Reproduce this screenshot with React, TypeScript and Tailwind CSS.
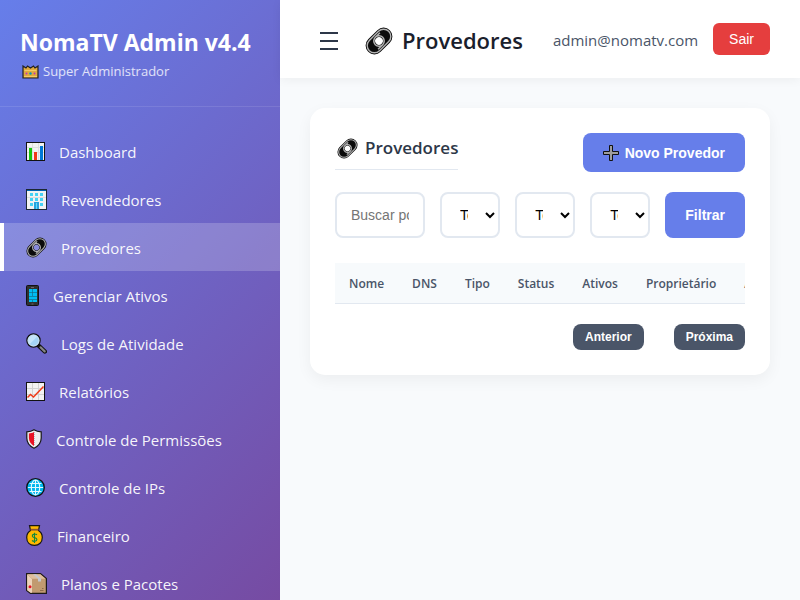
import React from 'react';

function LinkIcon({ size }: { size: number }) {
  return (
    <svg width={size} height={size} viewBox="0 0 28 28" fill="none" aria-hidden="true" className="shrink-0">
      <g transform="rotate(-45 14 14)">
        <path
          fillRule="evenodd"
          fill="#0b0b0b"
          d="M7.500 5.200H20.500A8.800 8.800 0 0 1 20.500 22.800H7.500A8.800 8.800 0 0 1 7.500 5.200ZM14 10.2A3.800 3.800 0 1 0 14 17.8A3.800 3.800 0 1 0 14 10.2Z"
        />
        <rect x="0.3" y="6.8" width="27.400" height="14.400" rx="7.2" stroke="#b4b4b4" strokeWidth="1.400" />
        <path d="M14 8.800A5.200 5.200 0 0 1 14 19.200H7.500M14 19.200A5.200 5.200 0 0 1 14 8.800H20.500" stroke="#b4b4b4" strokeWidth="1.500" />
      </g>
    </svg>
  );
}

function ChartIcon() {
  return (
    <svg width="19" height="19" viewBox="0 0 19 19" aria-hidden="true" className="shrink-0">
      <rect x="0.5" y="0.5" width="18" height="18" fill="#f2f2f2" stroke="#111" />
      <path d="M1 5.5H18M1 10.5H18M6.5 1V18M12.5 1V18" stroke="#dedede" strokeWidth="1" />
      <rect x="3" y="6" width="3" height="12" fill="#16c60c" />
      <rect x="8" y="10" width="3" height="8" fill="#f03a17" />
      <rect x="14" y="4" width="3" height="14" fill="#0078d7" />
    </svg>
  );
}

function BuildingIcon() {
  return (
    <svg width="21" height="21" viewBox="0 0 21 21" aria-hidden="true" className="shrink-0">
      <rect x="0.5" y="0.5" width="20" height="20" fill="#f2f2f2" stroke="#1b2733" />
      <rect x="1" y="1" width="19" height="1" fill="#0063b1" />
      <path d="M1 8.5H20" stroke="#ddd" />
      <path d="M4 4h3v3H4zM9 4h3v3H9zM14 4h3v3h-3zM4 9h3v3H4zM9 9h3v3H9zM14 9h3v3h-3zM4 14h3v3H4zM14 14h3v3h-3z" fill="#45d2f5" />
      <rect x="8" y="13" width="5" height="7" fill="#26a3de" />
      <path d="M10.500 14V20" stroke="#62d9fa" />
    </svg>
  );
}

function PhoneIcon() {
  return (
    <svg width="13" height="21" viewBox="0 0 13 21" aria-hidden="true" className="shrink-0">
      <rect x="0.5" y="0.5" width="12" height="20" rx="1" fill="#303030" stroke="#111" />
      <rect x="3" y="4" width="8" height="13" fill="#00bcf2" />
      <path d="M6.500 4V11M3 7.500H11M3 11.500H11M3 14.500H11M6.500 15V17" stroke="#14607a" strokeWidth="0.600" />
      <path d="M5 2.500H8M5.500 19H7.500" stroke="#777" strokeWidth="0.8" />
    </svg>
  );
}

function SearchIcon() {
  return (
    <svg width="21" height="21" viewBox="0 0 21 21" fill="none" aria-hidden="true" className="shrink-0">
      <path d="M13 13L18.800 18.500" stroke="#111" strokeWidth="4.400" strokeLinecap="round" />
      <path d="M14.500 14.300L18.700 18.400" stroke="#858585" strokeWidth="2.200" strokeLinecap="round" />
      <circle cx="7.500" cy="7.500" r="6.600" fill="#a4d5f5" stroke="#111" strokeWidth="1.300" />
      <path d="M2.400 7.500A5.100 5.100 0 0 1 11 3.800L3.900 11A5 5 0 0 1 2.400 7.500Z" fill="#c5e5fa" />
      <circle cx="7.500" cy="7.500" r="5.500" stroke="#d5e3ec" strokeWidth="0.800" />
    </svg>
  );
}

function TrendIcon() {
  return (
    <svg width="19" height="19" viewBox="0 0 19 19" fill="none" aria-hidden="true" className="shrink-0">
      <rect x="0.5" y="0.5" width="18" height="18" fill="#f2f2f2" stroke="#111" />
      <path d="M1 6.500H18M1 12.500H18M6.500 1V18M12.500 1V18" stroke="#d2d2d2" />
      <path d="M1.500 15.500L4.500 12.500L7.500 15L17.500 4.500" stroke="#f03a17" strokeWidth="1.500" />
    </svg>
  );
}

function ShieldIcon() {
  return (
    <svg width="16" height="20" viewBox="0 0 16 20" aria-hidden="true" className="shrink-0">
      <path d="M8 .8C5.800 2.300 3.500 2.800 .8 2.800V9C.8 13.800 4 17.300 8 19.200C12 17.300 15.200 13.800 15.200 9V2.800C12.500 2.800 10.200 2.300 8 .8Z" fill="#eee" stroke="#161616" strokeWidth="1.200" />
      <path d="M8 3C6.300 4 4.700 4.400 2.900 4.500V9C2.900 12.600 5.200 15.300 8 16.900Z" fill="#e81224" />
      <path d="M8.500 3V17" stroke="#bbb" strokeDasharray="1 1" />
    </svg>
  );
}

function GlobeIcon() {
  return (
    <svg width="19" height="19" viewBox="0 0 19 19" fill="none" aria-hidden="true" className="shrink-0">
      <circle cx="9.500" cy="9.500" r="8.800" fill="#00b7ee" stroke="#111" strokeWidth="1.300" />
      <path d="M9.500 2V17M2 9.500H17M3.500 5.500H15.500M3.500 13.500H15.500" stroke="#e4f8ff" strokeWidth="1.100" />
      <ellipse cx="9.500" cy="9.500" rx="4.200" ry="7.500" stroke="#e4f8ff" strokeWidth="1.100" />
    </svg>
  );
}

function MoneyIcon() {
  return (
    <svg width="17" height="21" viewBox="0 0 17 21" fill="none" aria-hidden="true" className="shrink-0">
      <path d="M3.500 .7H13.500L12.500 5.500C15 7 16.300 9.500 16.300 12.500C16.300 17.500 13 20.300 8.500 20.300C4 20.300 .7 17.500 .7 12.500C.7 9.500 2 7 4.500 5.500Z" fill="#ffb900" stroke="#161616" strokeWidth="1.200" />
      <path d="M4.500 4.700H12.500" stroke="#8e562e" strokeWidth="1.800" />
      <path d="M11 9.700C9.500 8.600 6.300 8.900 6.300 10.900C6.300 13.200 10.900 12 10.900 14.500C10.900 16.600 7.500 16.800 6 15.500M8.500 7.700V18" stroke="#10893e" strokeWidth="1.100" />
    </svg>
  );
}

function BoxIcon() {
  return (
    <svg width="21" height="21" viewBox="0 0 21 21" aria-hidden="true" className="shrink-0">
      <path d="M.6 .6H14.500L20.400 5.500V20.400H4.500L.6 17.500Z" fill="#c19a70" stroke="#1d1a1a" strokeWidth="1.200" />
      <path d="M1.200 1.200H14.200L19.500 5.800H6Z" fill="#dfbf9d" />
      <path d="M1.200 1.600L6 6V19.800H4.700L1.200 17.200Z" fill="#ecd3ba" />
      <path d="M7 1.200H10L15 5.800V8.500H12V5.800Z" fill="#c3c8d0" />
      <circle cx="4" cy="13.800" r="1.500" fill="#e81224" />
      <path d="M14 17.500H17.500M16 15.500H17.500" stroke="#8e6b4b" />
    </svg>
  );
}

function CrownIcon() {
  return (
    <svg width="17" height="14" viewBox="0 0 17 14" aria-hidden="true" className="shrink-0">
      <path d="M1 1L4 3L5.500 1L8.500 3L11.500 1L13 3L16 1V13H1Z" fill="#e0aa3e" stroke="#222" strokeWidth="1.200" />
      <path d="M2 11.500H15M2.500 5.500H14.500" stroke="#f5cb66" />
      <circle cx="4.500" cy="8.500" r="1" fill="#c239b3" />
      <circle cx="8.500" cy="8.500" r="1.200" fill="#0099bc" />
      <circle cx="12.500" cy="8.500" r="1" fill="#c239b3" />
    </svg>
  );
}

function PlusIcon() {
  return (
    <svg width="16" height="16" viewBox="0 0 16 16" aria-hidden="true" className="shrink-0">
      <path d="M6.500 .5H9.500V6.500H15.500V9.500H9.500V15.500H6.500V9.500H.5V6.500H6.500Z" fill="#9d9d9d" stroke="#111" />
    </svg>
  );
}

const menu = [
  { label: 'Dashboard', icon: <ChartIcon /> },
  { label: 'Revendedores', icon: <BuildingIcon /> },
  { label: 'Provedores', icon: <LinkIcon size={21} />, active: true },
  { label: 'Gerenciar Ativos', icon: <PhoneIcon /> },
  { label: 'Logs de Atividade', icon: <SearchIcon /> },
  { label: 'Relatórios', icon: <TrendIcon /> },
  { label: 'Controle de Permissões', icon: <ShieldIcon /> },
  { label: 'Controle de IPs', icon: <GlobeIcon /> },
  { label: 'Financeiro', icon: <MoneyIcon /> },
  { label: 'Planos e Pacotes', icon: <BoxIcon /> },
];

const filters = [
  { label: 'Tipo', options: ['Todos os tipos', 'Xtream', 'M3U'] },
  { label: 'Status', options: ['Todos os status', 'Ativo', 'Inativo'] },
  { label: 'Proprietário', options: ['Todos', 'Administrador'] },
];

const columns = ['Nome', 'DNS', 'Tipo', 'Status', 'Ativos', 'Proprietário', 'Ações'];

function Sidebar() {
  return (
    <aside className="w-[280px] shrink-0 overflow-hidden bg-linear-[135deg,#667eea_0%,#764ba2_100%] text-white">
      <div className="border-b border-white/10 px-5 pt-6 pb-[22px]">
        <h2 className="text-[23px] leading-9 font-bold whitespace-nowrap">NomaTV Admin v4.4</h2>
        <p className="flex h-6 items-center gap-1 pl-[2px] text-[13px] text-white/80">
          <CrownIcon />
          Super Administrador
        </p>
      </div>
      <nav className="pt-5">
        <ul>
          {menu.map((item) => (
            <li key={item.label}>
              <a
                href="#"
                aria-current={item.active ? 'page' : undefined}
                className={
                  item.active
                    ? 'flex h-12 items-center gap-[14px] border-l-4 border-white bg-white/20 px-[22px] text-[15px] text-white/95'
                    : 'flex h-12 items-center gap-[14px] border-l-4 border-transparent px-[22px] text-[15px] text-white/95'
                }
              >
                {item.icon}
                <span className="pt-[2px]">{item.label}</span>
              </a>
            </li>
          ))}
        </ul>
      </nav>
    </aside>
  );
}

export default function App() {
  return (
    <div className="flex h-screen overflow-hidden bg-[#f8fafc] font-['Open_Sans','Noto_Sans',sans-serif] text-[#2d3748]">
      <Sidebar />
      <div className="min-w-0 flex-1">
        <header className="flex h-[78px] items-center justify-between bg-white px-[30px] shadow-[0_2px_10px_rgba(0,0,0,0.05)]">
          <div className="flex items-center gap-[17px] pt-[3px]">
            <button type="button" aria-label="Abrir menu" className="p-[10px] text-[#2d3748]">
              <svg width="18" height="18" viewBox="0 0 18 18" aria-hidden="true">
                <path d="M0 1H18M0 9H18M0 17H18" stroke="currentColor" strokeWidth="1.800" />
              </svg>
            </button>
            <h1 className="flex items-center gap-[9px] text-[22px] font-semibold text-[#1a202c]">
              <LinkIcon size={28} />
              Provedores
            </h1>
          </div>
          <div className="flex items-center gap-[15px]">
            <span className="pt-[2px] text-[15px] text-[#4a5568]">admin@nomatv.com</span>
            <button type="button" className="h-8 rounded-md bg-[#e53e3e] px-4 font-['Liberation_Sans',sans-serif] text-sm text-white">
              Sair
            </button>
          </div>
        </header>

        <main className="p-[30px]">
          <section className="rounded-[15px] bg-white p-[25px] shadow-[0_5px_15px_rgba(0,0,0,0.05)]">
            <div className="mb-5 flex items-start justify-between">
              <h3 className="flex h-[37px] items-start gap-[7px] border-b border-[#e2e8f0] pl-[2px] text-[17px] leading-[30px] font-semibold">
                <span className="flex h-[30px] items-center">
                  <LinkIcon size={21} />
                </span>
                Provedores
              </h3>
              <button
                type="button"
                className="flex h-[39px] items-center gap-[6px] rounded-lg bg-[#667eea] px-5 font-['Liberation_Sans',sans-serif] text-sm font-bold text-white"
              >
                <PlusIcon />
                Novo Provedor
              </button>
            </div>

            <form className="grid grid-cols-[3fr_2fr_2fr_2fr_auto] gap-[15px] font-['Liberation_Sans',sans-serif] text-sm" onSubmit={(e) => e.preventDefault()}>
              <input
                type="text"
                aria-label="Buscar provedor"
                placeholder="Buscar por nome"
                className="h-[46px] w-full min-w-0 rounded-lg border-2 border-[#e2e8f0] px-[14px] placeholder:text-[#757575]"
              />
              {filters.map((filter) => (
                <select key={filter.label} aria-label={filter.label} className="h-[46px] w-full min-w-0 rounded-lg border-2 border-[#e2e8f0] bg-white px-[14px] text-black">
                  {filter.options.map((option) => (
                    <option key={option}>{option}</option>
                  ))}
                </select>
              ))}
              <button type="submit" className="h-[46px] rounded-lg bg-[#667eea] px-5 font-bold text-white">
                Filtrar
              </button>
            </form>

            <div className="mt-[25px] overflow-hidden">
              <table className="w-full border-collapse text-left text-xs whitespace-nowrap text-[#4a5568]">
                <thead className="bg-[#f7fafc]">
                  <tr className="h-10 border-b border-[#e2e8f0]">
                    {columns.map((column) => (
                      <th key={column} scope="col" className="px-[14px] pt-[2px] font-semibold">
                        {column}
                      </th>
                    ))}
                  </tr>
                </thead>
                <tbody />
              </table>
            </div>

            <div className="mt-5 flex justify-end gap-[30px] font-['Liberation_Sans',sans-serif] text-xs font-bold text-white">
              <button type="button" className="h-[26px] rounded-lg bg-[#4a5568] px-3">
                Anterior
              </button>
              <button type="button" className="h-[26px] rounded-lg bg-[#4a5568] px-3">
                Próxima
              </button>
            </div>
          </section>
        </main>
      </div>
    </div>
  );
}
